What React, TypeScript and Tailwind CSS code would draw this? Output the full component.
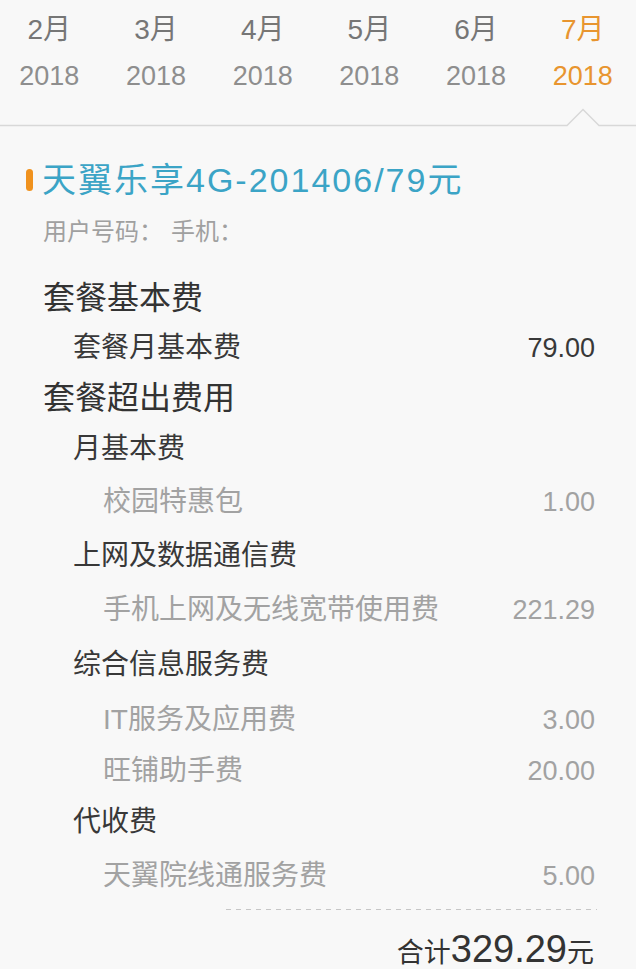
import React from 'react'

const months = ['2月', '3月', '4月', '5月', '6月', '7月']

type Row = {
  label: string
  value?: string
  level: 0 | 1 | 2
  h: string
}

const rows: Row[] = [
  { label: '套餐基本费', level: 0, h: 'h-[50px]' },
  { label: '套餐月基本费', value: '79.00', level: 1, h: 'h-[50px]' },
  { label: '套餐超出费用', level: 0, h: 'h-[50px]' },
  { label: '月基本费', level: 1, h: 'h-[52px]' },
  { label: '校园特惠包', value: '1.00', level: 2, h: 'h-[54px]' },
  { label: '上网及数据通信费', level: 1, h: 'h-[54px]' },
  { label: '手机上网及无线宽带使用费', value: '221.29', level: 2, h: 'h-[54px]' },
  { label: '综合信息服务费', level: 1, h: 'h-[56px]' },
  { label: 'IT服务及应用费', value: '3.00', level: 2, h: 'h-[54px]' },
  { label: '旺铺助手费', value: '20.00', level: 2, h: 'h-[48px]' },
  { label: '代收费', level: 1, h: 'h-[54px]' },
  { label: '天翼院线通服务费', value: '5.00', level: 2, h: 'h-[54px]' },
]

const levelClass = {
  0: 'pl-[43px] text-[32px] text-[#333]',
  1: 'pl-[73px] text-[28px] text-[#383838]',
  2: 'pl-[103px] text-[28px] text-[#a2a2a2]',
}

function MonthTabs() {
  return (
    <div>
      <div className="flex w-[640px] -ml-1 pt-[12px]">
        {months.map((m, i) => {
          const active = i === months.length - 1
          return (
            <div key={m} className="flex flex-1 flex-col items-center">
              <span className={`text-[28px] leading-[36px] ${active ? 'text-[#e8952f]' : 'text-[#767676]'}`}>{m}</span>
              <span className={`mt-[10px] text-[27px] leading-[36px] ${active ? 'text-[#e8952f]' : 'text-[#8e8e8e]'}`}>2018</span>
            </div>
          )
        })}
      </div>
      <svg className="mt-[14px] block" width="636" height="19" viewBox="0 0 636 19">
        <polyline points="0,17.5 567,17.5 583,1.5 599,17.5 636,17.5" fill="none" stroke="#d8d8d8" strokeWidth="1.5" />
      </svg>
    </div>
  )
}

export default function App() {
  return (
    <div className="min-h-[969px] w-[636px] overflow-hidden bg-[#f8f8f8] font-['Liberation_Sans','Noto_Sans_CJK_SC',sans-serif]">
      <MonthTabs />

      <div className="mt-[33px] flex h-[40px] items-center pl-[26px]">
        <span className="h-[22px] w-[7px] rounded-full bg-[#f0921e]" />
        <span className="ml-[9px] text-[34px] leading-none tracking-[2px] text-[#3ba4c6]">天翼乐享4G-201406/79元</span>
      </div>
      <div className="mt-[17px] flex h-[30px] items-center pl-[43px] text-[24px] leading-none text-[#a0a0a0]">
        <span>用户号码：</span>
        <span className="ml-[8px]">手机：</span>
      </div>

      <div className="mt-[26px]">
        {rows.map((r) => (
          <div key={r.label} className={`flex items-center justify-between pr-[41px] leading-none ${r.h} ${levelClass[r.level]}`}>
            <span>{r.label}</span>
            {r.value && <span className="text-[27px]">{r.value}</span>}
          </div>
        ))}
      </div>

      <div className="ml-[226px] mt-[6px] h-px w-[371px] bg-[linear-gradient(to_right,#c6c6c6_50%,transparent_50%)] bg-[length:10px_1px]" />

      <div className="mt-[20px] flex items-baseline justify-end pr-[42px] leading-none text-[#333]">
        <span className="text-[27px]">合计</span>
        <span className="text-[38px]">329.29</span>
        <span className="text-[27px]">元</span>
      </div>
    </div>
  )
}
